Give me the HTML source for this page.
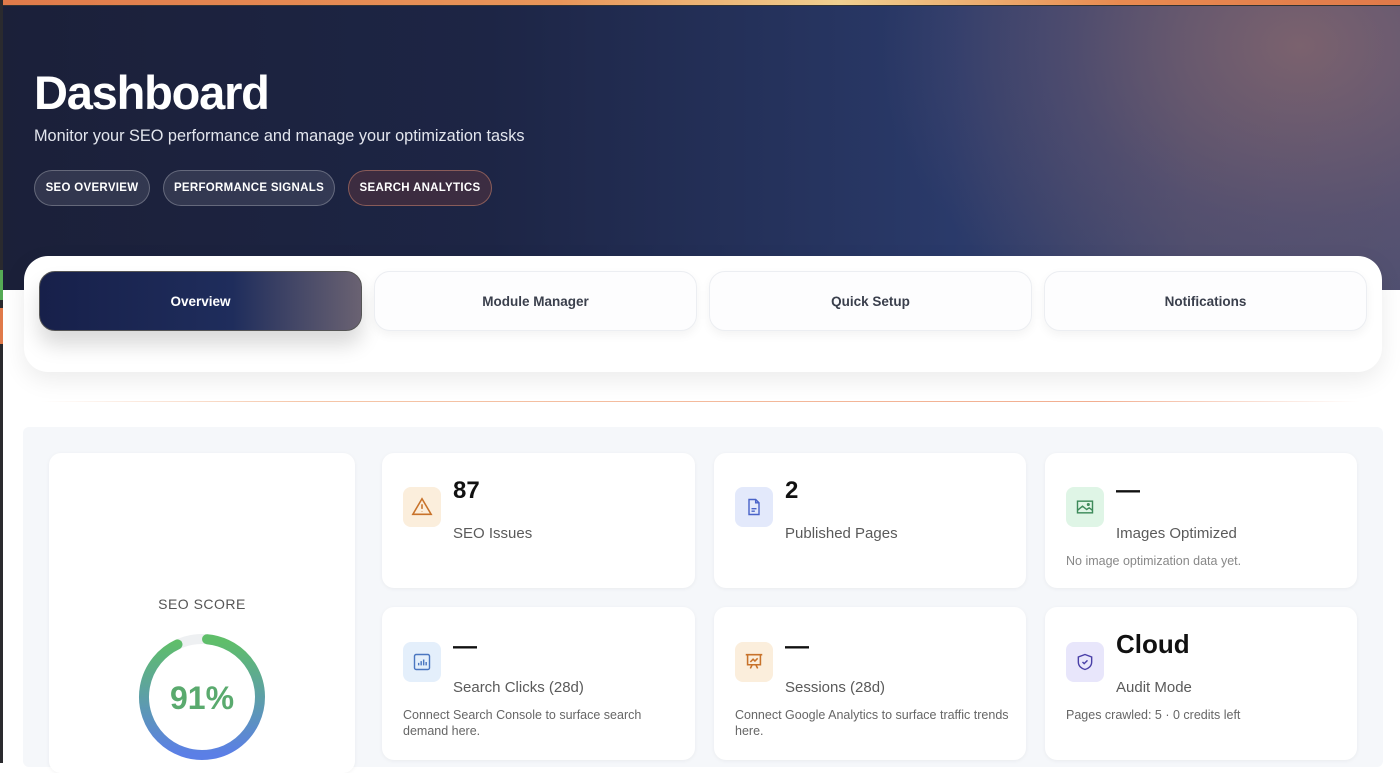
<!DOCTYPE html>
<html><head><meta charset="utf-8"><style>
*{box-sizing:border-box;margin:0;padding:0}
body{width:1400px;height:763px;overflow:hidden;background:#fff;font-family:"Liberation Sans",sans-serif;position:relative}
.strip{position:absolute;left:0;top:0;width:3px;height:763px;background:#2a2a2e;z-index:5}
.topbar{position:absolute;left:0;top:0;width:1400px;height:6px;background:linear-gradient(90deg,#e07a4a 0,#e8955a 40%,#f0d090 60%,#e88a50 80%,#e07a4a 100%);border-bottom:1px solid #333}
.hero{position:absolute;left:0;top:6px;width:1400px;height:284px;background:radial-gradient(ellipse 420px 320px at 1300px 40px,rgba(140,105,110,.75),rgba(110,90,115,.4) 55%,transparent 100%),linear-gradient(90deg,#1b2039 0,#1d2545 35%,#2a3a6a 68%,#454a6c 85%,#4a4e70 100%)}
h1{position:absolute;left:34px;top:65px;color:#fff;font-size:47px;font-weight:900;letter-spacing:-1.2px}
.sub{position:absolute;left:34px;top:127px;color:#e3e6ee;font-size:16.3px}
.pill{position:absolute;top:170px;height:36px;border-radius:18px;border:1px solid rgba(255,255,255,.25);background:rgba(255,255,255,.1);color:#fff;font-size:11.5px;font-weight:700;letter-spacing:.3px;line-height:34px;text-align:center}
.tabs{position:absolute;left:24px;top:256px;width:1358px;height:116px;background:#fff;border-radius:24px;box-shadow:0 8px 24px rgba(0,0,0,.08)}
.tab{position:absolute;top:15px;width:323px;height:60px;border-radius:16px;background:#fdfdfe;border:1px solid #eceef2;box-shadow:0 4px 10px rgba(0,0,0,.05);text-align:center;line-height:60px;font-size:13.5px;font-weight:700;color:#3a3f4c}
.tab.act{background:linear-gradient(90deg,#17204a 0,#1f2d5c 60%,#6a6272 100%);color:#fff;box-shadow:0 14px 20px rgba(0,0,0,.15);border-color:#555}
.line{position:absolute;left:40px;top:401px;width:1320px;height:1px;background:linear-gradient(90deg,rgba(255,255,255,0),#f5c6a8 20%,#f2ae90 80%,rgba(255,255,255,0))}
.panel{position:absolute;left:23px;top:427px;width:1360px;height:340px;background:#f5f7fa;border-radius:6px}
.card{position:absolute;background:#fff;border-radius:12px;box-shadow:0 1px 4px rgba(0,0,0,.05)}
.ic{position:absolute;left:21px;width:38px;height:40px;border-radius:8px;display:flex;align-items:center;justify-content:center}
.num{position:absolute;left:71px;font-size:24px;font-weight:700;color:#111}
.lbl{position:absolute;left:71px;font-size:15px;color:#5a5a5a}
.sm{position:absolute;left:21px;font-size:12.5px;color:#666;line-height:16px;width:250px}
</style></head><body>
<div class="hero"></div>
<div class="topbar"></div>
<div class="strip"><div style="position:absolute;top:270px;height:30px;width:3px;background:#5a5"></div><div style="position:absolute;top:308px;height:36px;width:3px;background:#e07a4a"></div></div>
<h1>Dashboard</h1>
<div class="sub">Monitor your SEO performance and manage your optimization tasks</div>
<div class="pill" style="left:34px;width:116px">SEO OVERVIEW</div>
<div class="pill" style="left:163px;width:172px">PERFORMANCE SIGNALS</div>
<div class="pill" style="left:348px;width:144px;background:rgba(120,60,60,.35);border-color:rgba(230,150,120,.45)">SEARCH ANALYTICS</div>
<div class="tabs">
<div class="tab act" style="left:15px">Overview</div>
<div class="tab" style="left:350px">Module Manager</div>
<div class="tab" style="left:685px">Quick Setup</div>
<div class="tab" style="left:1020px">Notifications</div>
</div>
<div class="line"></div>
<div class="panel"></div>
<div class="card" style="left:49px;top:453px;width:306px;height:320px">
<div style="position:absolute;top:143px;width:100%;text-align:center;font-size:14px;color:#555;letter-spacing:.5px">SEO SCORE</div>
<svg style="position:absolute;left:88px;top:179px" width="130" height="130" viewBox="0 0 130 130">
<defs><linearGradient id="g" gradientUnits="userSpaceOnUse" x1="0" y1="10" x2="0" y2="122"><stop offset="0" stop-color="#5fbe6a"/><stop offset="1" stop-color="#5b7fe6"/></linearGradient></defs>
<circle cx="65" cy="65" r="58" fill="none" stroke="#eef0f2" stroke-width="10"/>
<path d="M70.05 7.22 A58 58 0 1 1 40.49 12.43" fill="none" stroke="url(#g)" stroke-width="10" stroke-linecap="round"/>
<text x="65" y="77" text-anchor="middle" font-family="Liberation Sans" font-weight="700" font-size="32" fill="#5aaa6e">91%</text>
</svg>
</div>
<div class="card" style="left:382px;top:453px;width:313px;height:135px">
<div class="ic" style="top:34px;background:#fbeedc"><svg width="22" height="22" viewBox="0 0 24 24" fill="none" stroke="#c8722a" stroke-width="1.7"><path d="M12 3L2 20h20z"/><path d="M12 9v5M12 17v.5"/></svg></div>
<div class="num" style="top:24px">87</div><div class="lbl" style="top:72px">SEO Issues</div></div>
<div class="card" style="left:714px;top:453px;width:312px;height:135px">
<div class="ic" style="top:34px;background:#e3e9fb"><svg width="20" height="22" viewBox="0 0 24 24" fill="none" stroke="#4a63c8" stroke-width="1.7"><path d="M6 3h8l4 4v14H6z"/><path d="M14 3v4h4M9 14h6M9 17h4"/></svg></div>
<div class="num" style="top:24px">2</div><div class="lbl" style="top:72px">Published Pages</div></div>
<div class="card" style="left:1045px;top:453px;width:312px;height:135px">
<div class="ic" style="top:34px;background:#dff5e6"><svg width="22" height="20" viewBox="0 0 24 24" fill="none" stroke="#3d8a5a" stroke-width="1.7"><rect x="3" y="5" width="18" height="14"/><path d="M3 16l6-5 5 4 3-2 4 3"/><circle cx="16" cy="9" r="1"/></svg></div>
<div class="num" style="top:24px">—</div><div class="lbl" style="top:72px">Images Optimized</div>
<div class="sm" style="top:100px;color:#888">No image optimization data yet.</div></div>
<div class="card" style="left:382px;top:607px;width:313px;height:153px">
<div class="ic" style="top:35px;background:#e4effb"><svg width="20" height="20" viewBox="0 0 24 24" fill="none" stroke="#4a76c0" stroke-width="1.7"><rect x="3" y="3" width="18" height="18" rx="2"/><path d="M8 16v-3M11 16v-5M14 16v-7M17 16v-4"/></svg></div>
<div class="num" style="top:26px">—</div><div class="lbl" style="top:72px">Search Clicks (28d)</div>
<div class="sm" style="top:100px">Connect Search Console to surface search demand here.</div></div>
<div class="card" style="left:714px;top:607px;width:312px;height:153px">
<div class="ic" style="top:35px;background:#fbeedc"><svg width="22" height="22" viewBox="0 0 24 24" fill="none" stroke="#c8722a" stroke-width="1.7"><path d="M3 4h18M5 4v11h14V4M8 19l2-4M16 19l-2-4M8 12l3-3 2 2 3-3"/></svg></div>
<div class="num" style="top:26px">—</div><div class="lbl" style="top:72px">Sessions (28d)</div>
<div class="sm" style="top:100px;width:280px">Connect Google Analytics to surface traffic trends here.</div></div>
<div class="card" style="left:1045px;top:607px;width:312px;height:153px">
<div class="ic" style="top:35px;background:#e8e6fb"><svg width="20" height="20" viewBox="0 0 24 24" fill="none" stroke="#4a40a8" stroke-width="1.7"><path d="M12 3l8 3v6c0 5-4 8-8 9-4-1-8-4-8-9V6z"/><path d="M9 12l2 2 4-4"/></svg></div>
<div class="num" style="top:22px;font-size:26px">Cloud</div><div class="lbl" style="top:72px">Audit Mode</div>
<div class="sm" style="top:100px">Pages crawled: 5 · 0 credits left</div></div>
</body></html>
